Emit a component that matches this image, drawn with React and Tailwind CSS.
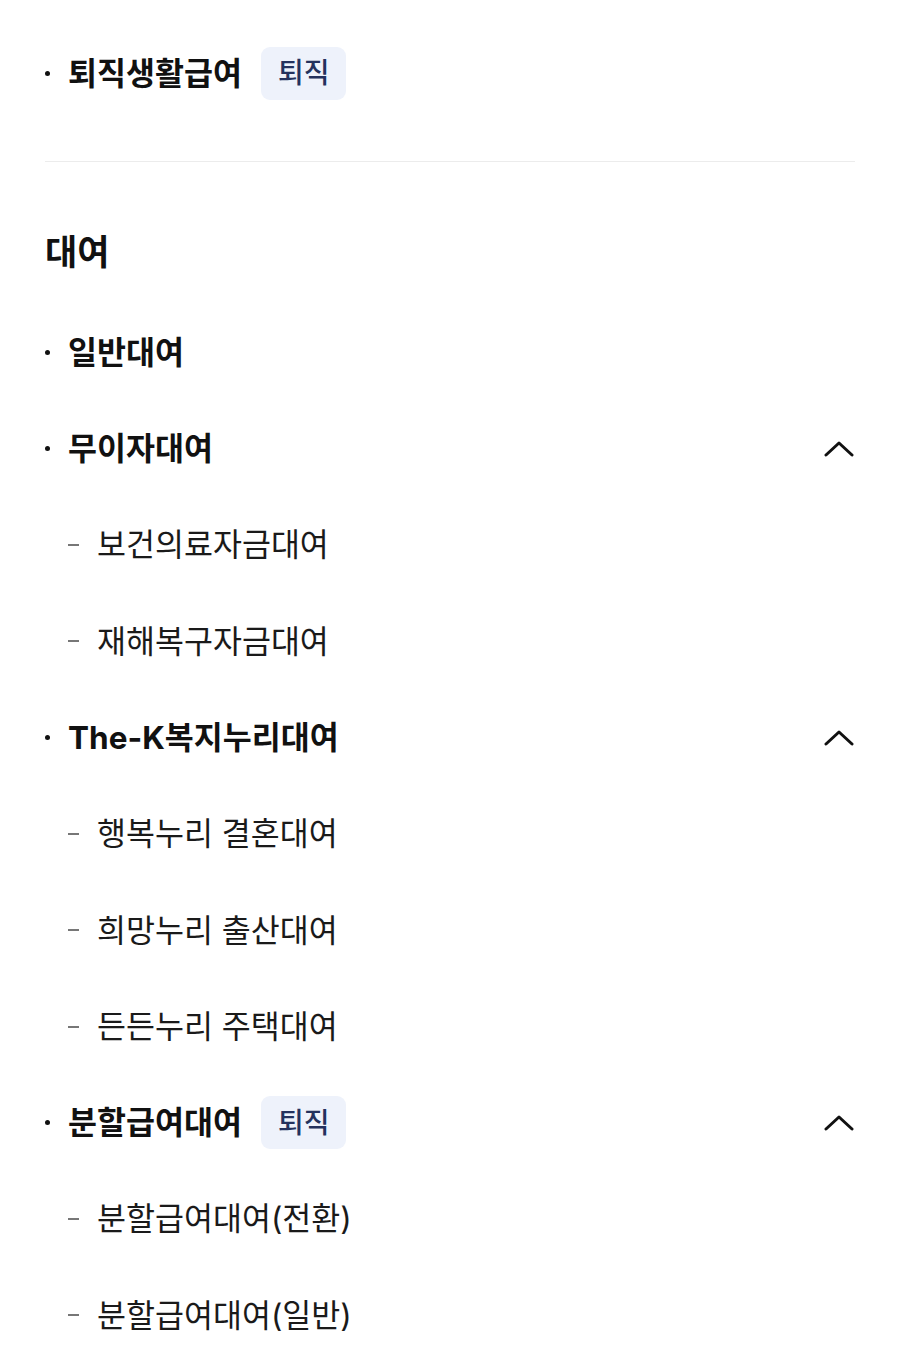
import React from "react";

const FONT = { fontFamily: '"Inter", "Noto Sans CJK KR", sans-serif' };

function Chevron() {
  return (
    <svg width="30" height="20" viewBox="0 0 30 20" fill="none" className="shrink-0">
      <path d="M2 16 L15 4 L28 16" stroke="#111" strokeWidth="3" strokeLinecap="round" strokeLinejoin="round" />
    </svg>
  );
}

function Badge({ children }) {
  return (
    <span className="ml-[19px] inline-flex h-[53px] items-center rounded-[9px] bg-[#eef2fb] px-[17px] text-[28px] font-medium text-[#24325e]">
      {children}
    </span>
  );
}

function MainRow({ label, badge, open }) {
  return (
    <div className="flex h-[96.3px] items-center">
      <span className="mr-[18px] block h-[5px] w-[5px] rounded-full bg-[#111]" />
      <span className="text-[31.5px] font-bold text-[#111]">{label}</span>
      {badge && <Badge>{badge}</Badge>}
      {open && (
        <div className="ml-auto pr-[1px]">
          <Chevron />
        </div>
      )}
    </div>
  );
}

function SubRow({ label }) {
  return (
    <div className="flex h-[96.3px] items-center pl-[23px]">
      <span className="mr-[18px] block h-[2px] w-[11px] bg-[#777]" />
      <span className="text-[31.5px] text-[#1a1a1a]">{label}</span>
    </div>
  );
}

export default function App() {
  const loans = [
    { label: "일반대여" },
    { label: "무이자대여", open: true, subs: ["보건의료자금대여", "재해복구자금대여"] },
    { label: "The-K복지누리대여", open: true, subs: ["행복누리 결혼대여", "희망누리 출산대여", "든든누리 주택대여"] },
    { label: "분할급여대여", badge: "퇴직", open: true, subs: ["분할급여대여(전환)", "분할급여대여(일반)"] },
  ];

  return (
    <div className="min-h-[1354px] bg-white px-[45px] pt-[25px]" style={FONT}>
      <MainRow label="퇴직생활급여" badge="퇴직" />
      <div className="mt-[40px] h-[1px] bg-[#ececec]" />

      <h2 className="mt-[70px] h-[40px] text-[35px] font-bold leading-[40px] text-[#111]">대여</h2>

      <div className="mt-[32px]">
        {loans.map((item) => (
          <div key={item.label}>
            <MainRow label={item.label} badge={item.badge} open={item.open} />
            {item.subs && item.subs.map((s) => <SubRow key={s} label={s} />)}
          </div>
        ))}
      </div>
    </div>
  );
}
